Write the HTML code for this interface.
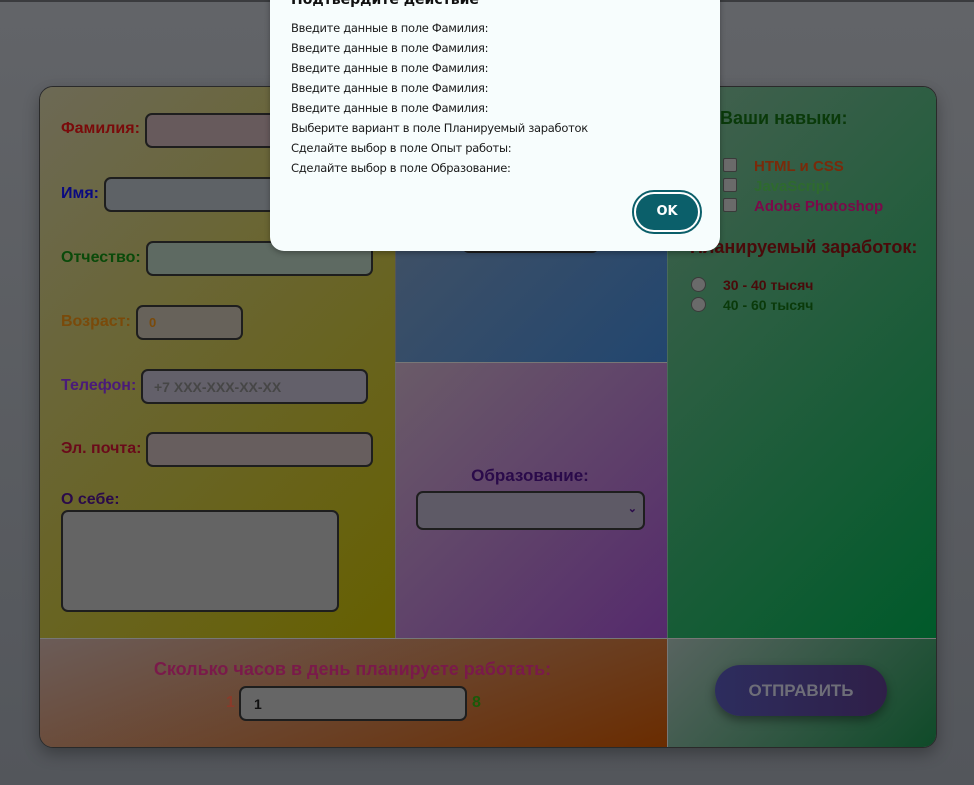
<!DOCTYPE html>
<html><head><meta charset="utf-8"><style>
*{box-sizing:border-box;margin:0;padding:0}
body{width:974px;height:785px;overflow:hidden;background:linear-gradient(180deg,#626468,#53565b);font-family:"Liberation Sans",Arial,sans-serif;position:relative}
.top{position:absolute;left:0;top:0;width:974px;height:2px;background:#3a3b3e}
.abs{position:absolute}
.wrap{position:absolute;left:39px;top:86px;width:898px;height:662px;border:1px solid #2a2a2a;border-radius:14px;overflow:hidden;box-shadow:0 6px 16px rgba(0,0,0,.3)}
.p{position:absolute}
.lbl{position:absolute;font-weight:bold;font-size:16px}
.inp{position:absolute;border:2px solid #1e1e1e;border-radius:7px}
.dlg{position:absolute;left:270px;top:-20px;width:450px;height:271px;background:#f7fdfd;border-radius:0 0 14px 14px;font-family:"DejaVu Sans","Liberation Sans",sans-serif;box-shadow:0 2px 6px rgba(0,0,0,.3)}
.dlg .ln{position:absolute;left:21px;font-size:11.5px;color:#1a1a1a;letter-spacing:-.3px}
</style></head><body>
<div class="top"></div>
<div class="wrap">
 <div class="p" style="left:0;top:0;width:355px;height:551px;background:linear-gradient(135deg,#6c6955,#666000)"></div>
 <div class="p" style="left:355px;top:0;width:272px;height:275px;background:linear-gradient(135deg,#4a5462,#22466f);border-left:1px solid #555"></div>
 <div class="p" style="left:355px;top:275px;width:272px;height:276px;background:linear-gradient(135deg,#6a5b68,#552a6c);border-left:1px solid #666;border-top:1px solid #777"></div>
 <div class="p" style="left:627px;top:0;width:271px;height:551px;background:linear-gradient(135deg,#44604f,#005a2a);border-left:1px solid #4a6a5a"></div>
 <div class="p" style="left:0;top:551px;width:627px;height:111px;background:linear-gradient(160deg,#6b5c58,#6a2c00);border-top:1px solid #777"></div>
 <div class="p" style="left:627px;top:551px;width:271px;height:111px;background:linear-gradient(135deg,#586460,#0e4a28);border-top:1px solid #777;border-left:1px solid #777"></div>
</div>

<div class="lbl" style="left:61px;top:120px;color:#7a0a0a">Фамилия:</div>
<div class="inp" style="left:145px;top:113px;width:228px;height:35px;background:#675a5c"></div>
<div class="lbl" style="left:61px;top:185px;color:#0a0a80">Имя:</div>
<div class="inp" style="left:104px;top:177px;width:230px;height:35px;background:#5e6266"></div>
<div class="lbl" style="left:61px;top:249px;color:#0a4a0a">Отчество:</div>
<div class="inp" style="left:146px;top:241px;width:227px;height:35px;background:#5e6a62"></div>
<div class="lbl" style="left:61px;top:313px;color:#7a4a0a">Возраст:</div>
<div class="inp" style="left:136px;top:305px;width:107px;height:35px;background:#67625a"><span class="abs" style="left:11px;top:8px;font-size:13px;font-weight:bold;color:#7a4a0a">0</span></div>
<div class="lbl" style="left:61px;top:377px;color:#4a1a7a">Телефон:</div>
<div class="inp" style="left:141px;top:369px;width:227px;height:35px;background:#63606a"><span class="abs" style="left:11px;top:8px;font-size:14px;font-weight:bold;color:#464646">+7 XXX-XXX-XX-XX</span></div>
<div class="lbl" style="left:61px;top:440px;color:#6a0a1a">Эл. почта:</div>
<div class="inp" style="left:146px;top:432px;width:227px;height:35px;background:#675e5e"></div>
<div class="lbl" style="left:61px;top:491px;color:#2a0a4a">О себе:</div>
<div class="inp" style="left:61px;top:510px;width:278px;height:102px;background:#646464"></div>

<div class="inp" style="left:462px;top:220px;width:137px;height:33px;background:#555e6a"></div>

<div class="lbl" style="left:394px;top:466px;width:272px;text-align:center;font-size:17px;color:#2a0a4a">Образование:</div>
<div class="inp" style="left:416px;top:491px;width:229px;height:39px;background:#5e5a66"><span class="abs" style="right:6px;top:9px;font-size:11px;color:#2a0a4a;font-weight:bold">⌄</span></div>

<div class="lbl" style="left:720px;top:108px;font-size:18px;color:#0a3a0a">Ваши навыки:</div>
<div class="inp" style="left:723px;top:158px;width:14px;height:14px;border-width:1px;border-color:#3a3a3a;border-radius:2px;background:#6a6a6a"></div>
<div class="inp" style="left:723px;top:178px;width:14px;height:14px;border-width:1px;border-color:#3a3a3a;border-radius:2px;background:#6a6a6a"></div>
<div class="inp" style="left:723px;top:198px;width:14px;height:14px;border-width:1px;border-color:#3a3a3a;border-radius:2px;background:#6a6a6a"></div>
<div class="lbl" style="left:754px;top:158px;font-size:15px;color:#7a2a0a">HTML и CSS</div>
<div class="lbl" style="left:754px;top:178px;font-size:15px;color:#2e6a2e">JavaScript</div>
<div class="lbl" style="left:754px;top:198px;font-size:15px;color:#7a0a4a">Adobe Photoshop</div>
<div class="lbl" style="left:690px;top:237px;font-size:18px;color:#4a0a0a">Планируемый заработок:</div>
<div class="inp" style="left:691px;top:277px;width:15px;height:15px;border-width:1px;border-color:#3a3a3a;border-radius:50%;background:#6a6a6a"></div>
<div class="inp" style="left:691px;top:297px;width:15px;height:15px;border-width:1px;border-color:#3a3a3a;border-radius:50%;background:#6a6a6a"></div>
<div class="lbl" style="left:723px;top:277px;font-size:14px;color:#4a0a0a">30 - 40 тысяч</div>
<div class="lbl" style="left:723px;top:297px;font-size:14px;color:#0a3a0a">40 - 60 тысяч</div>

<div class="lbl" style="left:39px;top:659px;width:627px;text-align:center;font-size:18px;color:#7a1a4a">Сколько часов в день планируете работать:</div>
<div class="lbl" style="left:226px;top:694px;color:#8a3a2a">1</div>
<div class="inp" style="left:239px;top:686px;width:228px;height:35px;background:#666"><span class="abs" style="left:13px;top:8px;font-size:14px;font-weight:bold;color:#111">1</span></div>
<div class="lbl" style="left:472px;top:694px;color:#1a5a0a">8</div>

<div class="abs" style="left:715px;top:665px;width:172px;height:51px;border-radius:26px;background:linear-gradient(90deg,#2d2d5e,#2f1f48);box-shadow:0 4px 10px rgba(0,0,0,.4);text-align:center;line-height:51px;font-weight:bold;font-size:17px;color:#6e6e78">ОТПРАВИТЬ</div>

<div class="dlg">
 <div class="abs" style="left:21px;top:12px;font-size:14px;font-weight:bold;color:#111">Подтвердите действие</div>
 <div class="ln" style="top:41px">Введите данные в поле Фамилия:</div>
 <div class="ln" style="top:61px">Введите данные в поле Фамилия:</div>
 <div class="ln" style="top:81px">Введите данные в поле Фамилия:</div>
 <div class="ln" style="top:101px">Введите данные в поле Фамилия:</div>
 <div class="ln" style="top:121px">Введите данные в поле Фамилия:</div>
 <div class="ln" style="top:141px">Выберите вариант в поле Планируемый заработок</div>
 <div class="ln" style="top:161px">Сделайте выбор в поле Опыт работы:</div>
 <div class="ln" style="top:181px">Сделайте выбор в поле Образование:</div>
 <div class="abs" style="left:362px;top:210px;width:70px;height:44px;border-radius:22px;border:2px solid #0b5f6a;padding:2px;background:#fff">
  <div style="width:100%;height:100%;border-radius:18px;background:#0b5f6a;color:#fff;font-weight:bold;font-size:13px;text-align:center;line-height:36px">OK</div>
 </div>
</div>
</body></html>
